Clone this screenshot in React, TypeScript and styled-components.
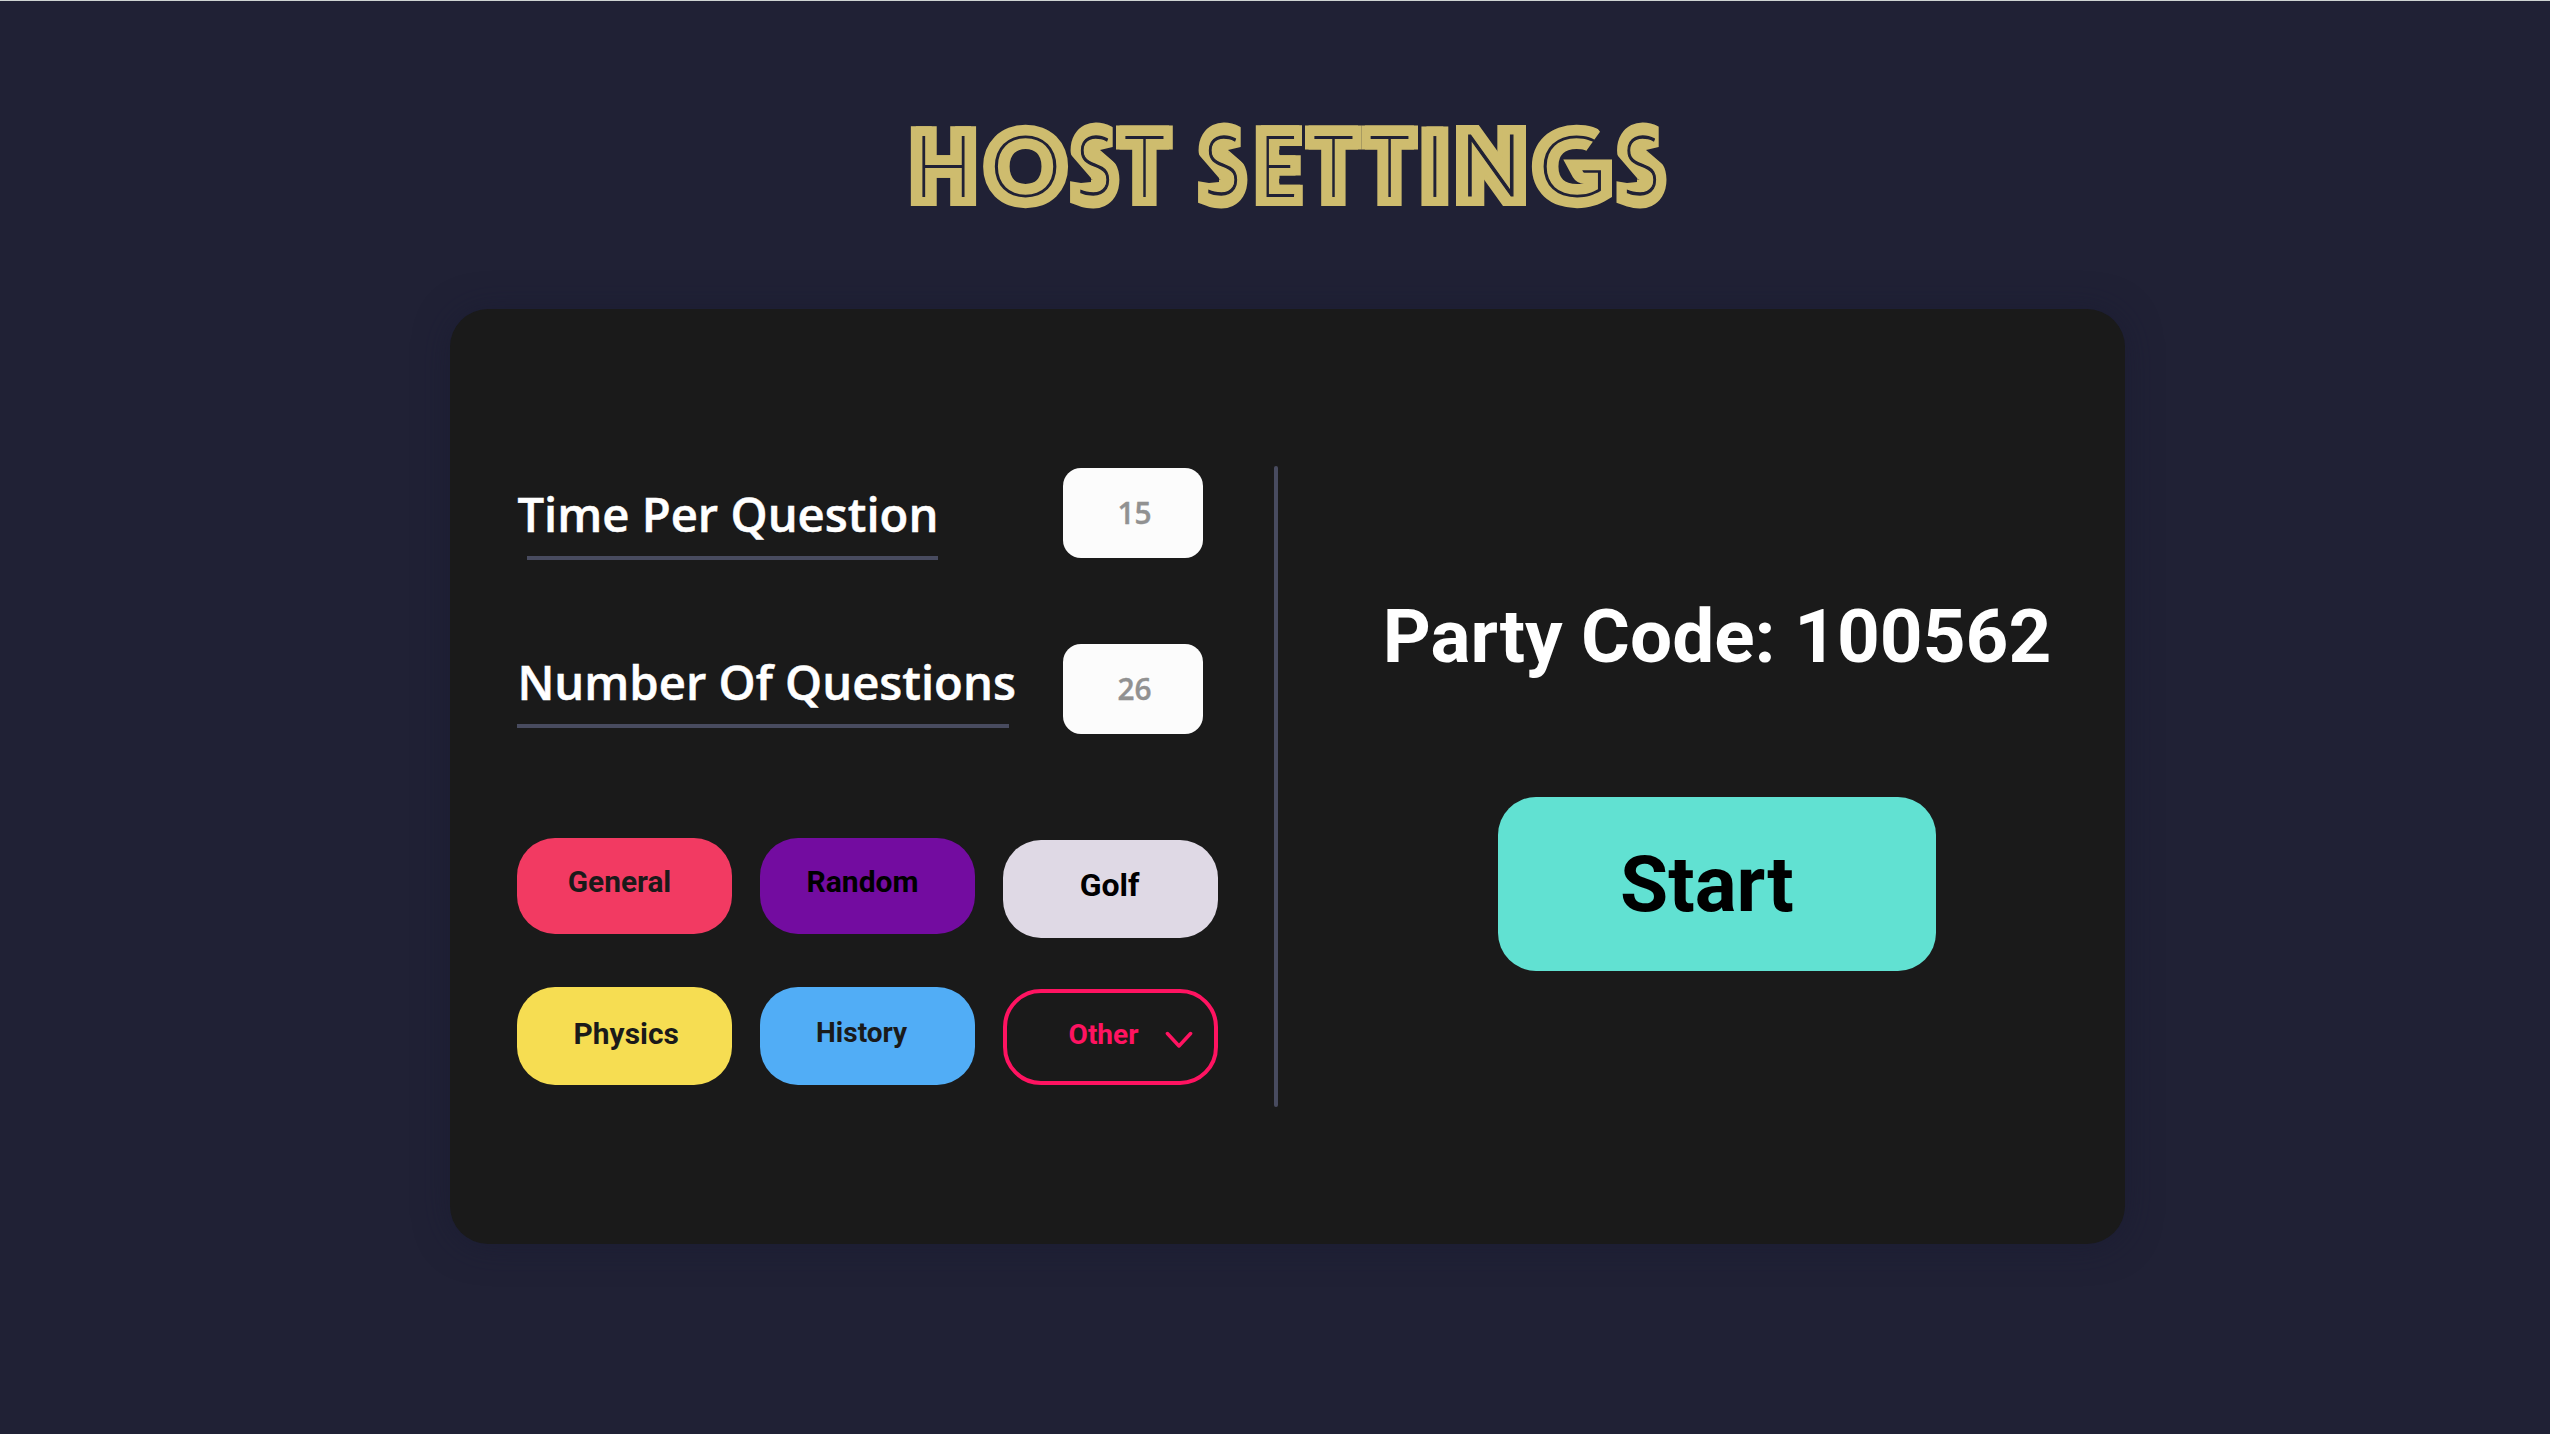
import React from "react";
import styled, { createGlobalStyle } from "styled-components";

const GOLD = "#cebc6e";
const NIGHT = "#202135";

const GlobalStyle = createGlobalStyle`
  *, *::before, *::after { box-sizing: border-box; }
  body { margin: 0; background: ${NIGHT}; }
`;

const Page = styled.main`
  width: 2550px;
  height: 1434px;
  overflow: hidden;
  display: flex;
  flex-direction: column;
  padding-left: 450px;
  background: ${NIGHT};
  border-top: 1px solid #ced4d2;
  font-family: Roboto, "Liberation Sans", sans-serif;
`;

/* ---------- Title ---------- */

const Title = styled.h1`
  margin: 114px 0 0 450px;
  height: 100px;
  font-size: 85px;
  line-height: 1;
`;

const Wordmark = styled.svg`
  display: block;
  width: 780px;
  height: 100px;
  font-size: 85px;
  font-weight: 100;
  overflow: visible;
`;

const Face = styled.text<{ $round: boolean; $family: string }>`
  font-family: ${(p) => p.$family}, sans-serif;
  fill: ${GOLD};
  stroke: ${GOLD};
  stroke-width: ${(p) => (p.$round ? 24.4 : 20.8)}px;
  stroke-miterlimit: 12;
  vector-effect: non-scaling-stroke;
`;

const Inline = styled.text<{ $weight: number; $family: string }>`
  font-family: ${(p) => p.$family}, sans-serif;
  fill: ${NIGHT};
  stroke: ${NIGHT};
  stroke-width: ${(p) => p.$weight}px;
  vector-effect: non-scaling-stroke;
`;

type Glyph = { c: string; box: [number, number]; line: [number, number] };

/* box: outer edges of the gold face; line: edges of the dark inline. */
const GLYPHS: Glyph[] = [
  { c: "H", box: [910, 977], line: [922.3, 964.7] },
  { c: "O", box: [983, 1068], line: [994.3, 1056.7] },
  { c: "S", box: [1069, 1121], line: [1080, 1109.4] },
  { c: "T", box: [1116, 1172.8], line: [1125, 1163.7] },
  { c: "S", box: [1197, 1249.3], line: [1207.9, 1237.3] },
  { c: "E", box: [1254, 1302.8], line: [1266.3, 1294] },
  { c: "T", box: [1305, 1361.7], line: [1314, 1352.7] },
  { c: "T", box: [1361.7, 1418], line: [1370.3, 1408.7] },
  { c: "I", box: [1421, 1449], line: [1433.3, 1436.7] },
  { c: "N", box: [1456, 1526], line: [1467.7, 1514] },
  { c: "G", box: [1532, 1612], line: [1543.3, 1601] },
  { c: "S", box: [1615, 1667.2], line: [1626.5, 1656.3] },
];

/* Ink edges of the hairline capitals, in ems. */
const INK: Record<string, [number, number]> = {
  H: [0.113, 0.635],
  O: [0.062, 0.722],
  S: [0.055, 0.488],
  T: [0.01, 0.56],
  E: [0.113, 0.525],
  I: [0.113, 0.131],
  N: [0.1, 0.597],
  G: [0.062, 0.668],
};

/* Trims for faces whose strokes would otherwise close up, from the box's left edge. */
const TRIM: Record<string, [number, number][]> = {
  S: [[0, 0], [43.7, 0], [43.7, 32], [31, 35], [53, 54], [53, 100], [0, 100], [0, 66], [12, 68], [22, 67], [22, 63], [3, 41], [0, 36]],
  E: [[0, 10], [48, 10], [48, 31], [25.3, 31], [25.3, 40.3], [47.7, 40.3], [47.7, 60.5], [25.3, 60.5], [25.3, 69.8], [48.8, 69.8], [48.8, 91], [0, 91]],
  G: [[-1, 0], [56, 0], [68, 16.7], [53.3, 37.3], [48.3, 44], [80, 44], [80, 100], [-1, 100]],
};

const ORIGIN_X = 900;

/* Baseline and vertical scale; round capitals overshoot the straight ones. */
const VERTICAL: Record<string, [number, number]> = {
  S: [79.4, 0.945],
  O: [80.5, 1],
  G: [80.5, 1],
};

function Letter({ glyph, index }: { glyph: Glyph; index: number }) {
  const { c, box, line } = glyph;
  const [l, r] = INK[c];
  const [baseline, sy] = VERTICAL[c] ?? [80.7, 1];
  const round = c in VERTICAL;
  const noto = "SN".includes(c);
  const family = noto ? '"Noto Sans"' : "Lato";
  const sx = c === "I" ? 1 : (line[1] - line[0] - 1.6) / ((r - l) * 85);
  const x = line[0] + 0.8 - l * 85 * sx - ORIGIN_X;
  const left = box[0] - ORIGIN_X;
  const w = box[1] - box[0];
  const clip = `face-${index}`;
  const place = (dx: number) => `translate(${x + dx} ${baseline}) scale(${sx} ${sy})`;
  return (
    <g>
      <clipPath id={clip}>
        {TRIM[c] ? (
          <polygon points={TRIM[c].map(([px, py]) => `${left + px},${py}`).join(" ")} />
        ) : round ? (
          <rect x={left - 1} y={0} width={w + 2} height={100} />
        ) : (
          <rect x={left} y={10} width={w} height={81} />
        )}
      </clipPath>
      <g clipPath={`url(#${clip})`} aria-hidden="true">
        <Face $round={round} $family={family} transform={place(round ? 0 : -2.6)}>{c}</Face>
        {!round && <Face $round={false} $family={family} transform={place(2.6)}>{c}</Face>}
      </g>
      <Inline $family={family} $weight={noto ? 1.2 : 1.9} transform={place(0)}>{c}</Inline>
    </g>
  );
}

/* ---------- Card ---------- */

const Card = styled.section`
  width: 1675px;
  height: 935px;
  margin-top: 94px;
  padding: 157px 0 0 67px;
  display: flex;
  align-items: flex-start;
  border-radius: 38px;
  background: #1a1a1a;
  box-shadow: 0 2px 34px rgba(24, 25, 50, 0.55);
`;

const Settings = styled.div`
  width: 702px;
  padding-top: 2px;
  display: flex;
  flex-direction: column;
`;

const Row = styled.div<{ $gap?: number }>`
  display: flex;
  align-items: flex-start;
  height: 90px;
  margin-top: ${(p) => p.$gap ?? 0}px;
`;

const LabelBlock = styled.div<{ $top: number }>`
  width: 546px;
  padding-top: ${(p) => p.$top}px;
`;

const Label = styled.label`
  display: block;
  height: 47px;
  margin-left: 0.4px;
  font-family: "Open Sans", "Noto Sans", sans-serif;
  font-size: 47.2px;
  font-weight: 600;
  line-height: 47px;
  white-space: nowrap;
  color: #fff;
  -webkit-text-stroke: 0.5px #fff;
`;

const Underline = styled.div<{ $left: number; $width: number }>`
  width: ${(p) => p.$width}px;
  height: 4px;
  margin: 18px 0 0 ${(p) => p.$left}px;
  background: #484b5f;
`;

const Field = styled.div`
  width: 140.4px;
  height: 90px;
  display: flex;
  justify-content: center;
  padding: 30px 0 0 2.8px;
  border-radius: 18px;
  background: #fcfcfc;
  font-family: "Open Sans", "Noto Sans", sans-serif;
  font-size: 29.8px;
  font-weight: 600;
  line-height: 30px;
  color: #919191;
  -webkit-text-stroke: 0.4px #919191;
`;

const Categories = styled.div`
  display: grid;
  grid-template-columns: repeat(3, 215.3px);
  grid-template-rows: 149.3px 98px;
  column-gap: 27.8px;
  align-items: start;
  margin-top: 104.5px;
`;

const Pill = styled.button<{
  $bg: string;
  $ink: string;
  $size: number;
  $x: number;
  $y: number;
  $h: number;
  $drop?: number;
  $line?: string;
}>`
  display: flex;
  align-items: flex-start;
  width: 100%;
  height: ${(p) => p.$h}px;
  margin: ${(p) => p.$drop ?? 0}px 0 0;
  padding: ${(p) => p.$y}px 0 0 ${(p) => p.$x}px;
  border: ${(p) => (p.$line ? `4px solid ${p.$line}` : "0")};
  border-radius: 38px;
  background: ${(p) => p.$bg};
  color: ${(p) => p.$ink};
  font-family: inherit;
  font-size: ${(p) => p.$size}px;
  font-weight: 700;
  line-height: 30px;
`;

const Chevron = styled.svg`
  width: 28px;
  height: 18px;
  margin: 10.8px 0 0 26.9px;
  fill: none;
  stroke: #ff1361;
  stroke-width: 3.5;
  stroke-linecap: round;
  stroke-linejoin: round;
`;

const Divider = styled.div`
  width: 4px;
  height: 641px;
  margin-left: 55px;
  border-radius: 2px;
  background: #484b5f;
`;

const Party = styled.div`
  display: flex;
  flex-direction: column;
  align-items: flex-start;
  padding: 133px 0 0 104px;
`;

const Code = styled.h2`
  margin: 0 0 0 0.8px;
  font-size: 74.7px;
  font-weight: 700;
  line-height: 75px;
  white-space: nowrap;
  color: #fff;
`;

const Start = styled.button`
  display: flex;
  align-items: flex-start;
  width: 437.7px;
  height: 174px;
  margin: 123px 0 0 116.3px;
  padding: 48px 0 0 121.7px;
  border: 0;
  border-radius: 38px;
  background: #61e1d2;
  color: #000;
  font-family: inherit;
  font-size: 78.3px;
  font-weight: 700;
  line-height: 78px;
`;

export default function App() {
  return (
    <Page>
      <GlobalStyle />
      <Title aria-label="Host Settings">
        <Wordmark viewBox="0 0 780 100">
          {GLYPHS.map((g, i) => (
            <Letter key={i} glyph={g} index={i} />
          ))}
        </Wordmark>
      </Title>
      <Card>
        <Settings>
          <Row>
            <LabelBlock $top={23}>
              <Label>Time Per Question</Label>
              <Underline $left={9.7} $width={411} />
            </LabelBlock>
            <Field>15</Field>
          </Row>
          <Row $gap={85.5}>
            <LabelBlock $top={15.5}>
              <Label>Number Of Questions</Label>
              <Underline $left={0} $width={492} />
            </LabelBlock>
            <Field>26</Field>
          </Row>
          <Categories>
            <Pill $bg="#f23a62" $ink="#1a1a1a" $size={29.8} $x={50.8} $y={29} $h={96}>General</Pill>
            <Pill $bg="#730ca0" $ink="#000" $size={30} $x={46.5} $y={29} $h={96}>Random</Pill>
            <Pill $bg="#dfd9e5" $ink="#000" $size={32} $x={76.5} $y={30} $h={97.6} $drop={2}>Golf</Pill>
            <Pill $bg="#f6dd52" $ink="#1a1a1a" $size={29.9} $x={56.6} $y={31.7} $h={97.6}>Physics</Pill>
            <Pill $bg="#51adf6" $ink="#1a1a1a" $size={28} $x={56} $y={31.2} $h={97.6}>History</Pill>
            <Pill $bg="transparent" $ink="#ff1361" $line="#ff1361" $size={28} $x={61.4} $y={27.2} $h={96} $drop={1.7}>
              Other
              <Chevron viewBox="0 0 28 18">
                <path d="M2.4 2.5 L14 15 L25.6 2.5" />
              </Chevron>
            </Pill>
          </Categories>
        </Settings>
        <Divider />
        <Party>
          <Code>Party Code: 100562</Code>
          <Start>Start</Start>
        </Party>
      </Card>
    </Page>
  );
}
